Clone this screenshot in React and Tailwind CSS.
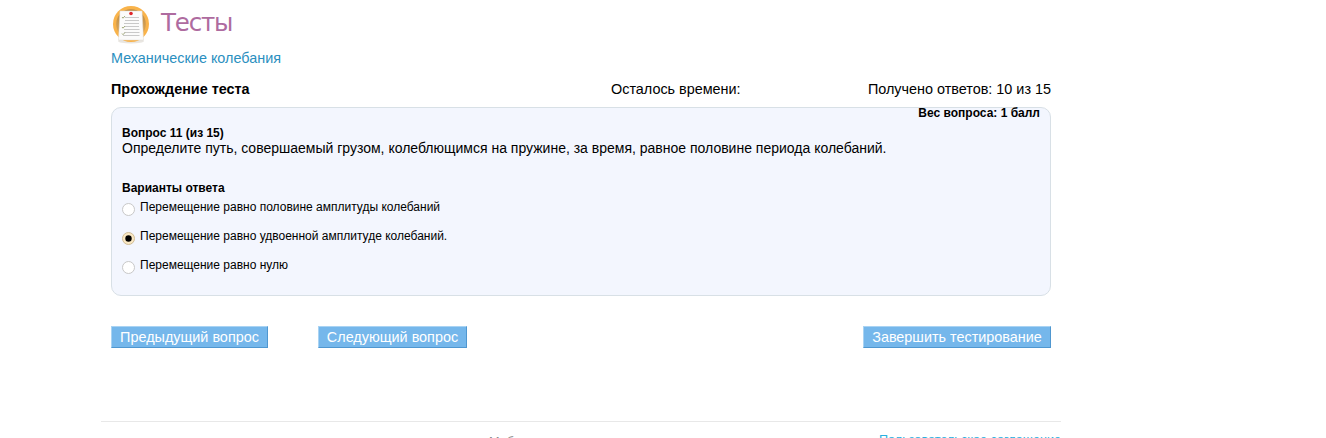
import React from "react";

function TestIcon() {
  return (
    <svg width="40" height="42" viewBox="0 0 40 42" className="shrink-0">
      <defs>
        <linearGradient id="disc" x1="0" y1="0" x2="0" y2="1">
          <stop offset="0" stopColor="#b98a45" />
          <stop offset="1" stopColor="#e3ac5c" />
        </linearGradient>
      </defs>
      <ellipse cx="20" cy="37" rx="13" ry="2.5" fill="#e9e6e1" />
      <circle cx="20" cy="20" r="18" fill="#f9b34a" />
      <circle cx="20" cy="20" r="14.8" fill="url(#disc)" />
      <path d="M9 7H31L32.5 36H7.5Z" fill="#fbfbfb" stroke="#dedad4" strokeWidth="0.5" />
      <circle cx="20" cy="9.5" r="1.8" fill="#e0262b" />
      <path d="M14 13.5H28M14 16.5H28M13 19.5H28M13 22.5H28M13 25.5H28.5M13 28.5H28.5M12 31.5H28.5" stroke="#c9c9c9" strokeWidth="1" />
      <path d="M11 13L12 14.2L14 12M11 23L12 24.2L14 22M11 29.5L12 30.7L14 28.5" fill="none" stroke="#a3ab7c" strokeWidth="1" />
    </svg>
  );
}

function Option({ checked, children }) {
  return (
    <label className="flex h-[29px] items-start">
      <span
        className={
          "mt-[4px] mr-[5px] flex size-[13px] shrink-0 items-center justify-center rounded-full border " +
          (checked ? "border-[#d0bd97] bg-[#fae8c3]" : "border-[#c8c8c8] bg-white")
        }
      >
        {checked && (
          <svg width="7" height="7" viewBox="0 0 7 7">
            <circle cx="3.5" cy="3.5" r="3.2" fill="#000" />
          </svg>
        )}
      </span>
      <span className="text-[12px] leading-[16px]">{children}</span>
    </label>
  );
}

function Button({ className, children }) {
  return (
    <button
      className={
        "flex h-[22px] items-center justify-center border border-t-[#a9d3f3] border-r-[#4f97d0] border-b-[#4f97d0] border-l-[#a9d3f3] bg-[#75b7eb] text-[14.4px] leading-[20px] whitespace-nowrap text-white " +
        className
      }
    >
      {children}
    </button>
  );
}

export default function App() {
  return (
    <div className="h-[438px] overflow-hidden bg-white font-['Liberation_Sans',Arial,sans-serif] text-black">
      <div className="ml-[101px] w-[960px]">
        <main className="h-[421px] px-[10px]">
          <header className="flex h-[48px] items-start pt-[4px]">
            <TestIcon />
            <h1 className="mt-[2px] ml-[10px] font-['DejaVu_Sans',sans-serif] text-[24.5px] leading-[34px] tracking-[-1.2px] text-[#ae6b9f]">Тесты</h1>
          </header>
          <a className="block text-[14.4px] leading-[20px] text-[#2b8fc0]">Механические колебания</a>
          <div className="mt-[11px] flex h-[28px] text-[14.4px] leading-[20px]">
            <strong className="w-[500px]">Прохождение теста</strong>
            <span>Осталось времени:</span>
            <span className="ml-auto">Получено ответов: 10 из 15</span>
          </div>
          <section className="h-[189px] rounded-[10px] border border-[#d8e0e6] bg-[#f3f6fe] px-[10px]">
            <div className="h-[17px] text-right text-[12px] leading-[10px] font-bold">Вес вопроса: 1 балл</div>
            <h2 className="text-[12px] leading-[16px] font-bold">Вопрос 11 (из 15)</h2>
            <p className="text-[14px] leading-[14px] whitespace-nowrap">
              Определите путь, совершаемый грузом, колеблющимся на пружине, за время, равное половине периода колебаний.
            </p>
            <h3 className="mt-[25px] mb-[3px] text-[12px] leading-[16px] font-bold">Варианты ответа</h3>
            <Option>Перемещение равно половине амплитуды колебаний</Option>
            <Option checked>Перемещение равно удвоенной амплитуде колебаний.</Option>
            <Option>Перемещение равно нулю</Option>
          </section>
          <div className="mt-[30px] flex">
            <Button className="w-[157px]">Предыдущий вопрос</Button>
            <Button className="ml-[50px] w-[149px]">Следующий вопрос</Button>
            <Button className="ml-auto w-[188px]">Завершить тестирование</Button>
          </div>
        </main>
        <footer className="flex border-t border-[#e8e8e8] pt-[10px] text-[12.65px] leading-[16px] whitespace-nowrap">
          <span className="mt-[2px] ml-[388px] text-[#8c8c8c]">Мобильная версия</span>
          <a className="ml-auto text-[#2ab0e0]">Пользовательское соглашение</a>
        </footer>
      </div>
    </div>
  );
}
